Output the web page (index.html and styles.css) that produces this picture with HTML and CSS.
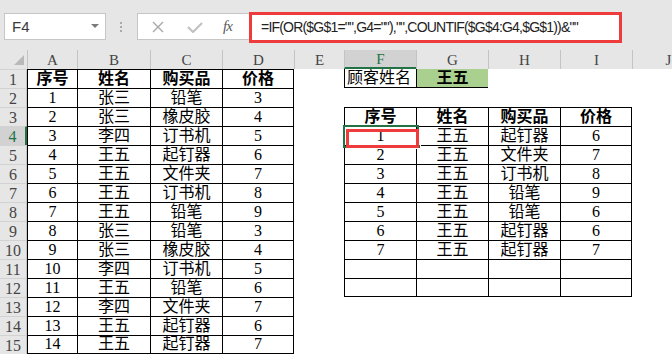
FILE: index.html
```html
<!DOCTYPE html>
<html lang="zh">
<head>
<meta charset="utf-8">
<title>Excel</title>
<link rel="stylesheet" href="styles.css">
</head>
<body>
<div class="topbar">
  <div class="namebox"><span class="ref">F4</span><span class="caret"></span></div>
  <div class="grip"><i></i><i></i><i></i></div>
  <div class="tools">
    <svg class="ico-x" width="12" height="12" viewBox="0 0 12 12"><path d="M1 1L11 11M11 1L1 11" stroke="#a8a8a8" stroke-width="1.4" fill="none"/></svg>
    <svg class="ico-ok" width="16" height="11" viewBox="0 0 16 11"><path d="M1 5L6 10L15 1" stroke="#c2c2c2" stroke-width="2.2" fill="none"/></svg>
    <span class="fx">fx</span>
  </div>
  <div class="formula">=IF(OR($G$1="",G4=""),"",COUNTIF($G$4:G4,$G$1))&amp;""</div>
</div>
<div class="sheet">
  <div class="corner"><span class="tri"></span></div>
  <div class="ch">A</div><div class="ch">B</div><div class="ch">C</div><div class="ch">D</div><div class="ch">E</div><div class="ch on">F</div><div class="ch">G</div><div class="ch">H</div><div class="ch">I</div><div class="ch">J</div>

  <div class="rh">1</div>
  <div class="c g hd">序号</div><div class="c g hd">姓名</div><div class="c g hd">购买品</div><div class="c g gr hd">价格</div>
  <div class="c"></div>
  <div class="c lb left">顾客姓名</div><div class="c lb hd green">王五</div><div class="c"></div><div class="c"></div><div class="c"></div>

  <div class="rh">2</div>
  <div class="c g">1</div><div class="c g">张三</div><div class="c g">铅笔</div><div class="c g gr">3</div>
  <div class="c"></div><div class="c"></div><div class="c"></div><div class="c"></div><div class="c"></div><div class="c"></div>

  <div class="rh">3</div>
  <div class="c g">2</div><div class="c g">张三</div><div class="c g">橡皮胶</div><div class="c g gr">4</div>
  <div class="c"></div>
  <div class="c g hd">序号</div><div class="c g hd">姓名</div><div class="c g hd">购买品</div><div class="c g gr hd">价格</div>
  <div class="c"></div>

  <div class="rh on">4</div>
  <div class="c g">3</div><div class="c g">李四</div><div class="c g">订书机</div><div class="c g gr">5</div>
  <div class="c"></div>
  <div class="c g active">1<span class="sel"></span><span class="handle"></span><span class="mark"></span></div><div class="c g">王五</div><div class="c g">起钉器</div><div class="c g gr">6</div>
  <div class="c"></div>

  <div class="rh">5</div>
  <div class="c g">4</div><div class="c g">王五</div><div class="c g">起钉器</div><div class="c g gr">6</div>
  <div class="c"></div>
  <div class="c g">2</div><div class="c g">王五</div><div class="c g">文件夹</div><div class="c g gr">7</div>
  <div class="c"></div>

  <div class="rh">6</div>
  <div class="c g">5</div><div class="c g">王五</div><div class="c g">文件夹</div><div class="c g gr">7</div>
  <div class="c"></div>
  <div class="c g">3</div><div class="c g">王五</div><div class="c g">订书机</div><div class="c g gr">8</div>
  <div class="c"></div>

  <div class="rh">7</div>
  <div class="c g">6</div><div class="c g">王五</div><div class="c g">订书机</div><div class="c g gr">8</div>
  <div class="c"></div>
  <div class="c g">4</div><div class="c g">王五</div><div class="c g">铅笔</div><div class="c g gr">9</div>
  <div class="c"></div>

  <div class="rh">8</div>
  <div class="c g">7</div><div class="c g">王五</div><div class="c g">铅笔</div><div class="c g gr">9</div>
  <div class="c"></div>
  <div class="c g">5</div><div class="c g">王五</div><div class="c g">铅笔</div><div class="c g gr">6</div>
  <div class="c"></div>

  <div class="rh">9</div>
  <div class="c g">8</div><div class="c g">张三</div><div class="c g">铅笔</div><div class="c g gr">3</div>
  <div class="c"></div>
  <div class="c g">6</div><div class="c g">王五</div><div class="c g">起钉器</div><div class="c g gr">6</div>
  <div class="c"></div>

  <div class="rh">10</div>
  <div class="c g">9</div><div class="c g">张三</div><div class="c g">橡皮胶</div><div class="c g gr">4</div>
  <div class="c"></div>
  <div class="c g">7</div><div class="c g">王五</div><div class="c g">起钉器</div><div class="c g gr">7</div>
  <div class="c"></div>

  <div class="rh">11</div>
  <div class="c g">10</div><div class="c g">李四</div><div class="c g">订书机</div><div class="c g gr">5</div>
  <div class="c"></div>
  <div class="c g"></div><div class="c g"></div><div class="c g"></div><div class="c g gr"></div>
  <div class="c"></div>

  <div class="rh">12</div>
  <div class="c g">11</div><div class="c g">王五</div><div class="c g">铅笔</div><div class="c g gr">6</div>
  <div class="c"></div>
  <div class="c g gb"></div><div class="c g gb"></div><div class="c g gb"></div><div class="c g gr gb"></div>
  <div class="c"></div>

  <div class="rh">13</div>
  <div class="c g">12</div><div class="c g">李四</div><div class="c g">文件夹</div><div class="c g gr">7</div>
  <div class="c"></div><div class="c"></div><div class="c"></div><div class="c"></div><div class="c"></div><div class="c"></div>

  <div class="rh">14</div>
  <div class="c g">13</div><div class="c g">王五</div><div class="c g">起钉器</div><div class="c g gr">6</div>
  <div class="c"></div><div class="c"></div><div class="c"></div><div class="c"></div><div class="c"></div><div class="c"></div>

  <div class="rh">15</div>
  <div class="c g gb">14</div><div class="c g gb">王五</div><div class="c g gb">起钉器</div><div class="c g gr gb">7</div>
  <div class="c"></div><div class="c"></div><div class="c"></div><div class="c"></div><div class="c"></div><div class="c"></div>
</div>
</body>
</html>
```
FILE: styles.css
```css
* { box-sizing: border-box; }
html, body { margin: 0; padding: 0; }
body {
  width: 672px;
  height: 355px;
  overflow: hidden;
  background: #fff;
}

/* ---------- formula bar ---------- */
.topbar {
  height: 50px;
  background: #e6e6e6;
  display: flex;
  align-items: flex-start;
}
.namebox {
  margin: 13px 0 0 4px;
  width: 102px;
  height: 27px;
  background: #fff;
  border: 1px solid #c6c6c6;
  display: flex;
  align-items: center;
  justify-content: space-between;
  padding: 0 6px 0 7px;
  font: 15px "Liberation Sans", Arial, sans-serif;
  color: #3a3a3a;
}
.caret {
  width: 0;
  height: 0;
  border-left: 4px solid transparent;
  border-right: 4px solid transparent;
  border-top: 4px solid #7a7a7a;
  margin-top: -2px;
}
.grip {
  margin: 22px 0 0 14px;
  width: 2px;
  display: flex;
  flex-direction: column;
  gap: 2px;
}
.grip i {
  display: block;
  width: 2px;
  height: 2px;
  background: #aaa;
}
.tools {
  margin: 13px 0 0 15px;
  width: 112px;
  height: 27px;
  background: #fff;
  border: 1px solid #c6c6c6;
  border-right: none;
  display: flex;
  align-items: center;
}
.ico-x { margin-left: 14px; }
.ico-ok { margin-left: 23px; margin-top: 2px; }
.fx {
  margin-left: 20px;
  font: italic 15px "Liberation Serif", serif;
  color: #5a5a5a;
  letter-spacing: -1px;
}
.formula {
  margin-top: 12px;
  width: 373px;
  height: 31px;
  border: 3px solid #ee3b3b;
  background: #fff;
  padding-left: 9px;
  font: 14px "Liberation Sans", Arial, sans-serif;
  letter-spacing: -0.8px;
  line-height: 25px;
  color: #222;
  white-space: nowrap;
}

/* ---------- sheet grid ---------- */
.sheet {
  display: grid;
  grid-template-columns: 27px 50px 73px 72px 72px 50px 72px 72px 72px 72px 72px;
  grid-auto-rows: 19px;
  width: 704px;
}
.corner {
  background: #e6e6e6;
  position: relative;
}
.tri {
  position: absolute;
  right: 3px;
  bottom: 4px;
  width: 0;
  height: 0;
  border-left: 10px solid transparent;
  border-bottom: 10px solid #b9b9b9;
}
.ch {
  background: #e6e6e6;
  border-left: 1px solid #c4c4c4;
  display: flex;
  align-items: center;
  justify-content: center;
  font: 15px "Liberation Serif", serif;
  color: #444;
  padding-top: 1px;
}
.ch.on {
  background: #d2d2d2;
  color: #217346;
  border-bottom: 2px solid #217346;
  padding-top: 2px;
}
.rh {
  background: #e6e6e6;
  border-top: 1px solid #d2d2d2;
  border-right: 1px solid #c4c4c4;
  display: flex;
  align-items: center;
  justify-content: center;
  font: 16px "Liberation Serif", serif;
  color: #444;
  padding-top: 1px;
}
.rh.on {
  background: #d2d2d2;
  color: #217346;
  border-right: 2px solid #217346;
}

.c {
  display: flex;
  align-items: flex-end;
  justify-content: center;
  font: 16px/18px "Liberation Serif", "Noto Sans CJK SC", serif;
  color: #000;
  white-space: nowrap;
  background: #fff;
}
.g { border-left: 1px solid #000; border-top: 1px solid #000; }
.gr { border-right: 1px solid #000; }
.gb { border-bottom: 1px solid #000; }
.lb { border-left: 1px solid #000; border-bottom: 1px solid #000; }
.hd { font-weight: 700; }
.left { justify-content: flex-start; padding-left: 2px; }
.green { background: #a9d08e; }

.active { position: relative; }
.sel {
  position: absolute;
  left: -2px;
  top: -2px;
  width: 76px;
  height: 23px;
  border: 2px solid #217346;
}
.handle {
  position: absolute;
  right: -5px;
  bottom: -4px;
  width: 5px;
  height: 5px;
  background: #217346;
  border: 1px solid #fff;
}
.mark {
  position: absolute;
  left: 1px;
  top: 2px;
  width: 73px;
  height: 19px;
  border: 3px solid #ee3b3b;
}
```
